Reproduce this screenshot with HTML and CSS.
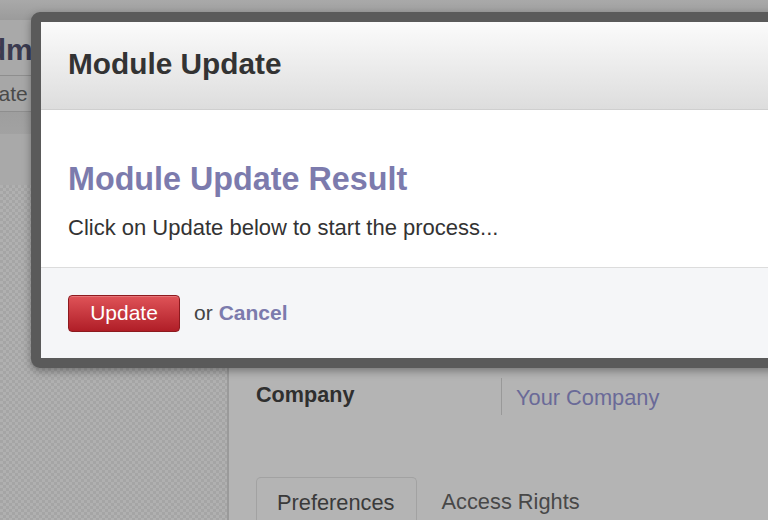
FILE: index.html
```html
<!DOCTYPE html>
<html>
<head>
<meta charset="utf-8">
<link rel="stylesheet" href="styles.css">
</head>
<body>
<div class="app">
  <div class="topbar"></div>
  <div class="titlebar"><h1 class="page-title">Administrator</h1></div>
  <div class="actionbar"><span class="action">Update</span></div>
  <div class="subbar"></div>
  <div class="subbar2"></div>
  <div class="content">
    <aside class="sidebar"></aside>
    <main class="main">
      <div class="field-row">
        <div class="field-label">Company</div>
        <div class="field-value">Your Company</div>
      </div>
      <div class="tabs">
        <div class="tab active">Preferences</div>
        <div class="tab">Access Rights</div>
      </div>
    </main>
  </div>
</div>

<div class="modal">
  <div class="modal-header"><h3 class="modal-title">Module Update</h3></div>
  <div class="modal-body">
    <h2 class="result-title">Module Update Result</h2>
    <p class="result-text">Click on Update below to start the process...</p>
  </div>
  <div class="modal-footer">
    <button class="btn-update">Update</button>
    <span class="or">or</span>
    <a class="cancel">Cancel</a>
  </div>
</div>
</body>
</html>
```

FILE: styles.css
```css
* { box-sizing: border-box; }
html, body {
  margin: 0;
  padding: 0;
  width: 768px;
  height: 520px;
  overflow: hidden;
  font-family: "Liberation Sans", Arial, sans-serif;
  background: #b3b3b3;
}
.app {
  display: flex;
  flex-direction: column;
  height: 520px;
  overflow: hidden;
}
.app > * { flex-shrink: 0; }
.topbar {
  height: 20px;
  background: linear-gradient(#a9a9a9, #9b9b9b);
}
.titlebar {
  height: 56px;
  background: #a9a9a9;
  border-bottom: 1px solid #8e8e8e;
  display: flex;
  align-items: center;
  overflow: hidden;
}
.page-title {
  margin: 0 0 0 -34px;
  font-size: 30px;
  font-weight: bold;
  color: #3b3b50;
  white-space: nowrap;
  padding-top: 4px;
}
.actionbar {
  height: 36px;
  background: #a7a7a7;
  border-bottom: 1px solid #8e8e8e;
  display: flex;
  align-items: center;
  overflow: hidden;
}
.action {
  margin-left: -40px;
  font-size: 21px;
  color: #4a4a4a;
}
.subbar {
  height: 22px;
  background: linear-gradient(#9e9e9e, #a2a2a2);
}
.subbar2 {
  height: 51px;
  background: #a9a9a9;
}
.content {
  flex: 1 0 auto;
  display: grid;
  grid-template-columns: 229px 1fr;
}
.sidebar {
  background-color: #acacac;
  background-image: repeating-conic-gradient(#a5a5a5 0 25%, #b0b0b0 0 50%);
  background-size: 6px 6px;
  border-right: 2px solid #9a9a9a;
}
.main {
  background: #b4b4b4;
  padding: 193px 0 0 27px;
  display: flex;
  flex-direction: column;
}
.field-row {
  display: grid;
  grid-template-columns: 245px 1fr;
  height: 37px;
  align-items: center;
}
.field-label {
  font-size: 21.6px;
  font-weight: bold;
  color: #2f2f2f;
  padding-bottom: 3px;
}
.field-value {
  height: 37px;
  border-left: 1px solid #999;
  padding-left: 14px;
  font-size: 21.8px;
  color: #6a6a98;
  display: flex;
  align-items: center;
  padding-top: 2px;
}
.tabs {
  margin-top: 62px;
  display: flex;
  align-items: flex-start;
}
.tab {
  font-size: 21.8px;
  color: #484848;
  padding: 12px 20px 20px 25px;
}
.tab.active {
  border: 1px solid #a2a2a2;
  border-bottom: none;
  border-radius: 5px 5px 0 0;
  padding: 12px 21px 20px 20px;
  color: #3a3a3a;
}

/* modal */
.modal {
  position: absolute;
  top: 12px;
  left: 31px;
  width: 800px;
  border: 10px solid #5a5a5a;
  border-radius: 9px;
  background: #fff;
  box-shadow: 0 3px 8px rgba(0,0,0,0.35);
  overflow: hidden;
}
.modal-header {
  height: 88px;
  background: linear-gradient(#fbfbfb, #dddddd);
  border-bottom: 1px solid #cfcfcf;
  display: flex;
  align-items: center;
  padding: 0 0 4px 27px;
}
.modal-title {
  margin: 0;
  font-size: 29.8px;
  font-weight: bold;
  color: #333;
}
.modal-body {
  height: 157px;
  background: #fff;
  padding: 50px 0 0 27px;
}
.result-title {
  margin: 0;
  font-size: 32.3px;
  line-height: 38px;
  font-weight: bold;
  color: #7c7bad;
}
.result-text {
  margin: 17px 0 0;
  font-size: 22px;
  line-height: 26px;
  color: #333;
}
.modal-footer {
  height: 91px;
  background: #f5f6f8;
  border-top: 1px solid #dcdcdc;
  display: flex;
  align-items: center;
  padding-left: 27px;
  font-size: 21px;
}
.btn-update {
  width: 112px;
  height: 37px;
  border: 1px solid #8d1a1f;
  border-radius: 4px;
  background: linear-gradient(#df5358, #b01e27);
  color: #fff;
  font-family: "Liberation Sans", Arial, sans-serif;
  font-size: 21px;
  padding: 0;
  box-shadow: inset 0 1px 0 rgba(255,255,255,0.2);
}
.or {
  margin-left: 14px;
  color: #444;
}
.cancel {
  margin-left: 6px;
  color: #7c7bad;
  font-weight: bold;
}
```
